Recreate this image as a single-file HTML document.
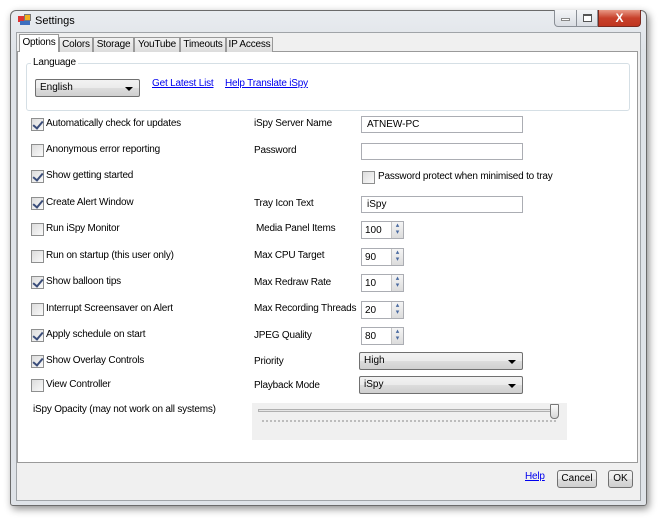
<!DOCTYPE html>
<html><head><style>
*{box-sizing:border-box;margin:0;padding:0}
body{width:660px;height:520px;background:#fff;font-family:"Liberation Sans",sans-serif;font-size:10px;color:#000;position:relative;overflow:hidden}
.a{position:absolute;white-space:nowrap}
.win{left:10px;top:10px;width:637px;height:496px;border:1px solid #6b6b6b;border-radius:6px 6px 3px 3px;background:linear-gradient(#e9ecf0,#dfe3e8 40px,#dfe3e8);box-shadow:2px 3px 8px rgba(0,0,0,.45)}
.client{left:16px;top:32px;width:625px;height:469px;background:#f0f0f0;border:1px solid #a0a4a8}
.tab{top:37px;height:15px;border:1px solid #999;border-bottom:none;background:linear-gradient(#f2f2f2,#dcdcdc);font-size:10px;letter-spacing:-0.2px;text-align:center;line-height:13px}
.page{left:17px;top:51px;width:621px;height:412px;background:#fff;border:1px solid #9a9a9a}
.cb{width:13px;height:13px;border:1px solid #8e8f8f;background:linear-gradient(135deg,#dcdcdc,#fafafa)}
.cb.on::after{content:"";position:absolute;left:3px;top:0px;width:4px;height:8px;border:solid #3a4d7a;border-width:0 2px 2px 0;transform:rotate(40deg)}
.lbl{font-size:10px;letter-spacing:-0.2px}
.tb{height:17px;border:1px solid #abadb3;background:#fff;padding:2px 0 0 5px;font-size:10px}
.sp{width:43px;height:18px;border:1px solid #abadb3;background:#fff;padding:3px 0 0 3px;font-size:10px}
.sp::after{content:"▴\A▾";white-space:pre;line-height:7px;font-size:7px;color:#4a6aa0;text-align:center;position:absolute;right:0;top:0;width:11px;height:16px;background:linear-gradient(#f5f5f5,#dcdcdc);border-left:1px solid #c4c4c4}
.cmb{height:18px;border:1px solid #707070;border-radius:2px;background:linear-gradient(#f2f2f2,#ebebeb 50%,#dddddd 50%,#cfcfcf);padding:2px 0 0 4px;font-size:10px}
.cmb::after{content:"";position:absolute;right:6px;top:7px;border:4px solid transparent;border-top:4px solid #000;border-bottom:none}
.lnk{color:#0000ee;text-decoration:underline;font-size:10px;letter-spacing:-0.2px}
.btn{height:18px;border:1px solid #707070;border-radius:3px;background:linear-gradient(#f2f2f2,#ebebeb 50%,#dddddd 50%,#cfcfcf);text-align:center;line-height:16px;font-size:10px}
</style></head><body>
<div class="a win"></div>
<div class="a" style="left:18px;top:16px;width:6px;height:6px;background:#d33"></div>
<div class="a" style="left:24px;top:14px;width:7px;height:7px;background:#f0b020;border:1px solid #777"></div>
<div class="a" style="left:20px;top:21px;width:10px;height:4px;background:#3d6fc0"></div>
<div class="a" style="left:35px;top:15px;font-size:11px">Settings</div>
<div class="a" style="left:554px;top:10px;width:44px;height:17px;border:1px solid #8a8f96;border-top:none;border-radius:0 0 0 4px;background:linear-gradient(#f4f5f7,#d9dde3)"></div>
<div class="a" style="left:576px;top:10px;width:1px;height:17px;background:#8a8f96"></div>
<div class="a" style="left:561px;top:18px;width:9px;height:3px;border:1px solid #888;background:#fff"></div>
<div class="a" style="left:583px;top:14px;width:9px;height:8px;border:1px solid #555;border-top-width:2px;background:#fff"></div>
<div class="a" style="left:598px;top:10px;width:43px;height:17px;border:1px solid #7a2a20;border-top:none;border-radius:0 0 4px 0;background:linear-gradient(#e99a86,#c8412b 50%,#c03520);color:#fff;font-weight:bold;font-size:12px;text-align:center;line-height:16px">X</div>
<div class="a client"></div>
<div class="a page"></div>
<div class="a tab" style="left:59px;width:34px">Colors</div>
<div class="a tab" style="left:93px;width:41px">Storage</div>
<div class="a tab" style="left:134px;width:46px">YouTube</div>
<div class="a tab" style="left:180px;width:46px">Timeouts</div>
<div class="a tab" style="left:226px;width:47px">IP Access</div>
<div class="a tab" style="left:19px;top:34px;width:40px;height:18px;background:#fff;line-height:16px">Options</div>
<div class="a" style="left:26px;top:63px;width:604px;height:48px;border:1px solid #d5dfe5;border-radius:3px"></div>
<div class="a lbl" style="left:31px;top:57px;background:#fff;padding:0 2px">Language</div>
<div class="a cmb" style="left:35px;top:79px;width:105px">English</div>
<div class="a lnk" style="left:152px;top:78px">Get Latest List</div>
<div class="a lnk" style="left:225px;top:78px">Help Translate iSpy</div>

<div class="a cb on" style="left:31px;top:118px"></div><div class="a lbl" style="left:46px;top:118px">Automatically check for updates</div>
<div class="a cb" style="left:31px;top:144px"></div><div class="a lbl" style="left:46px;top:144px">Anonymous error reporting</div>
<div class="a cb on" style="left:31px;top:170px"></div><div class="a lbl" style="left:46px;top:170px">Show getting started</div>
<div class="a cb on" style="left:31px;top:197px"></div><div class="a lbl" style="left:46px;top:197px">Create Alert Window</div>
<div class="a cb" style="left:31px;top:223px"></div><div class="a lbl" style="left:46px;top:223px">Run iSpy Monitor</div>
<div class="a cb" style="left:31px;top:250px"></div><div class="a lbl" style="left:46px;top:250px">Run on startup (this user only)</div>
<div class="a cb on" style="left:31px;top:276px"></div><div class="a lbl" style="left:46px;top:276px">Show balloon tips</div>
<div class="a cb" style="left:31px;top:303px"></div><div class="a lbl" style="left:46px;top:303px">Interrupt Screensaver on Alert</div>
<div class="a cb on" style="left:31px;top:329px"></div><div class="a lbl" style="left:46px;top:329px">Apply schedule on start</div>
<div class="a cb on" style="left:31px;top:355px"></div><div class="a lbl" style="left:46px;top:355px">Show Overlay Controls</div>
<div class="a cb" style="left:31px;top:379px"></div><div class="a lbl" style="left:46px;top:379px">View Controller</div>
<div class="a lbl" style="left:33px;top:404px">iSpy Opacity (may not work on all systems)</div>

<div class="a lbl" style="left:254px;top:118px">iSpy Server Name</div>
<div class="a lbl" style="left:254px;top:145px">Password</div>
<div class="a lbl" style="left:254px;top:198px">Tray Icon Text</div>
<div class="a lbl" style="left:256px;top:223px">Media Panel Items</div>
<div class="a lbl" style="left:254px;top:250px">Max CPU Target</div>
<div class="a lbl" style="left:254px;top:277px">Max Redraw Rate</div>
<div class="a lbl" style="left:254px;top:303px">Max Recording Threads</div>
<div class="a lbl" style="left:254px;top:330px">JPEG Quality</div>
<div class="a lbl" style="left:254px;top:356px">Priority</div>
<div class="a lbl" style="left:254px;top:380px">Playback Mode</div>

<div class="a tb" style="left:361px;top:116px;width:162px">ATNEW-PC</div>
<div class="a tb" style="left:361px;top:143px;width:162px"></div>
<div class="a cb" style="left:362px;top:171px"></div><div class="a lbl" style="left:378px;top:171px">Password protect when minimised to tray</div>
<div class="a tb" style="left:361px;top:196px;width:162px">iSpy</div>
<div class="a sp" style="left:361px;top:221px">100</div>
<div class="a sp" style="left:361px;top:248px">90</div>
<div class="a sp" style="left:361px;top:274px">10</div>
<div class="a sp" style="left:361px;top:301px">20</div>
<div class="a sp" style="left:361px;top:327px">80</div>
<div class="a cmb" style="left:359px;top:352px;width:164px">High</div>
<div class="a cmb" style="left:359px;top:376px;width:164px">iSpy</div>

<div class="a" style="left:252px;top:403px;width:315px;height:37px;background:#f0f0f0"></div>
<div class="a" style="left:258px;top:409px;width:298px;height:3px;border:1px solid #b0b0b0;background:#e6e6e6"></div>
<div class="a" style="left:262px;top:420px;width:294px;height:2px;border-top:2px dotted #bcbcbc"></div>
<div class="a" style="left:550px;top:404px;width:9px;height:15px;border:1px solid #777;border-radius:1px 1px 4px 4px;background:linear-gradient(#fafafa,#d8d8d8)"></div>

<div class="a lnk" style="left:525px;top:471px">Help</div>
<div class="a btn" style="left:557px;top:470px;width:40px">Cancel</div>
<div class="a btn" style="left:608px;top:470px;width:25px">OK</div>
</body></html>
